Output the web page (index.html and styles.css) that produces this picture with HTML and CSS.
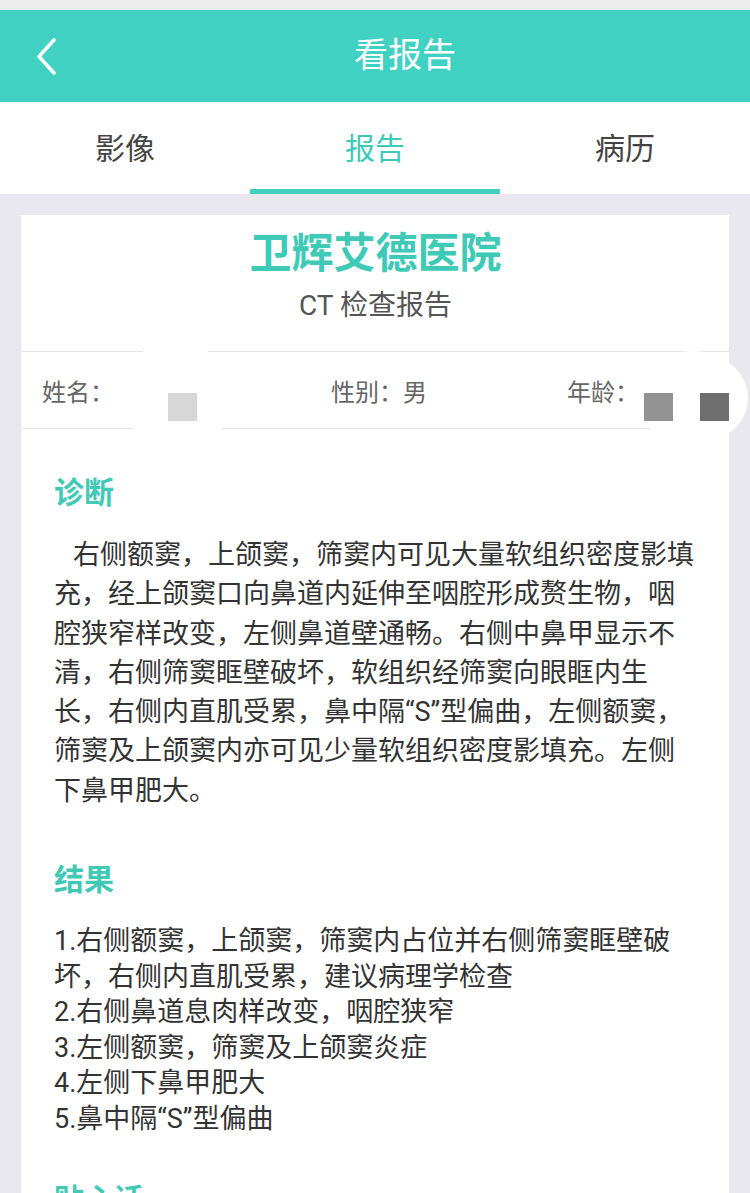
FILE: index.html
```html
<!DOCTYPE html>
<html lang="zh-CN">
<head>
<meta charset="utf-8">
<title>看报告</title>
<link rel="stylesheet" href="styles.css">
</head>
<body>
<div class="status"></div>
<header class="topbar">
  <svg class="back" width="40" height="50" viewBox="0 0 40 50"><polyline points="24,8 9,24.5 24,41" fill="none" stroke="#fff" stroke-width="3.6" stroke-linecap="round" stroke-linejoin="round"/></svg>
  <h1 class="title">看报告</h1>
</header>
<nav class="tabs">
  <div class="tab">影像</div>
  <div class="tab active">报告</div>
  <div class="tab">病历</div>
</nav>
<main class="card">
  <div class="hospital">卫辉艾德医院</div>
  <div class="subtitle">CT 检查报告</div>
  <div class="info">
    <span class="info-item">姓名：</span>
    <span class="info-item">性别：男</span>
    <span class="info-item">年龄：</span>
    <span class="mask mask-top"></span>
    <span class="mask mask-bottom"></span>
    <span class="mask mask-round"></span>
    <span class="sq sq1"></span>
    <span class="sq sq2"></span>
    <span class="sq sq3"></span>
  </div>
  <section class="section">
    <h2 class="sec-title">诊断</h2>
    <p class="text indent">右侧额窦，上颌窦，筛窦内可见大量软组织密度影填<br>充，经上颌窦口向鼻道内延伸至咽腔形成赘生物，咽<br>腔狭窄样改变，左侧鼻道壁通畅。右侧中鼻甲显示不<br>清，右侧筛窦眶壁破坏，软组织经筛窦向眼眶内生<br>长，右侧内直肌受累，鼻中隔“S”型偏曲，左侧额窦，<br>筛窦及上颌窦内亦可见少量软组织密度影填充。左侧<br>下鼻甲肥大。</p>
  </section>
  <section class="section">
    <h2 class="sec-title">结果</h2>
    <p class="text list">1.右侧额窦，上颌窦，筛窦内占位并右侧筛窦眶壁破<br>坏，右侧内直肌受累，建议病理学检查<br>2.右侧鼻道息肉样改变，咽腔狭窄<br>3.左侧额窦，筛窦及上颌窦炎症<br>4.左侧下鼻甲肥大<br>5.鼻中隔“S”型偏曲</p>
  </section>
  <section class="section last">
    <h2 class="sec-title">贴心话</h2>
  </section>
</main>
</body>
</html>
```

FILE: styles.css
```css
html, body {
  margin: 0;
  padding: 0;
}
body {
  width: 750px;
  height: 1193px;
  overflow: hidden;
  background: #e9e8ee;
  font-family: Roboto, "Noto Sans CJK SC", sans-serif;
  color: #333;
}
.status {
  height: 10px;
  background: #ececec;
}
.topbar {
  height: 92px;
  background: #40d1c2;
  display: flex;
  align-items: center;
  justify-content: center;
  padding-left: 60px;
  box-sizing: border-box;
  position: relative;
}
.back {
  position: absolute;
  left: 30px;
  top: 22px;
}
.title {
  margin: 0 0 2px;
  font-size: 34px;
  font-weight: 400;
  color: #fff;
  line-height: 40px;
}
.tabs {
  height: 92px;
  background: #fff;
  display: flex;
}
.tab {
  flex: 1;
  display: flex;
  align-items: center;
  justify-content: center;
  font-size: 30px;
  color: #444;
  box-sizing: border-box;
  border-bottom: 5px solid transparent;
  padding-top: 0;
}
.tab.active {
  color: #3fc9b8;
  border-bottom-color: #40d1c2;
}
.card {
  margin: 21px 21px 0;
  background: #fff;
  padding: 14px 32px 40px 33px;
  display: flex;
  flex-direction: column;
}
.hospital {
  text-align: center;
  font-size: 42px;
  line-height: 50px;
  font-weight: 700;
  color: #3ecab6;
}
.subtitle {
  text-align: center;
  font-size: 28px;
  line-height: 36px;
  margin-top: 9px;
  color: #555;
}
.info {
  position: relative;
  margin: 27px -32px 0 -33px;
  height: 76px;
  border-top: 1px solid #e4e4e4;
  border-bottom: 1px solid #e4e4e4;
  display: grid;
  grid-template-columns: 289px 236px auto;
  align-items: center;
  padding-left: 21px;
  font-size: 24px;
  color: #666;
}
.mask {
  position: absolute;
  background: #fff;
}
.mask-top {
  left: 122px;
  top: -4px;
  width: 65px;
  height: 8px;
}
.mask-bottom {
  left: 111px;
  bottom: -4px;
  width: 90px;
  height: 8px;
}
.mask-round {
  left: 616px;
  top: -1px;
  width: 111px;
  height: 94px;
  border-radius: 50%;
}
.sq {
  position: absolute;
  top: 41px;
  width: 29px;
  height: 28px;
}
.sq1 { left: 147px; background: #d7d7d7; }
.sq2 { left: 623px; background: #939393; }
.sq3 { left: 679px; background: #6e6e6e; }
.section {
  margin-top: 44px;
}
.section + .section {
  margin-top: 49px;
}
.section.last {
  margin-top: 43px;
}
.sec-title {
  margin: 0;
  font-size: 30px;
  line-height: 40px;
  font-weight: 700;
  color: #41c9b5;
}
.text {
  margin: 23px 0 0;
  font-size: 27px;
  white-space: nowrap;
  color: #333;
}
.indent {
  line-height: 39.3px;
  text-indent: 19px;
}
.list {
  margin-top: 24px;
  line-height: 35.5px;
}
```
